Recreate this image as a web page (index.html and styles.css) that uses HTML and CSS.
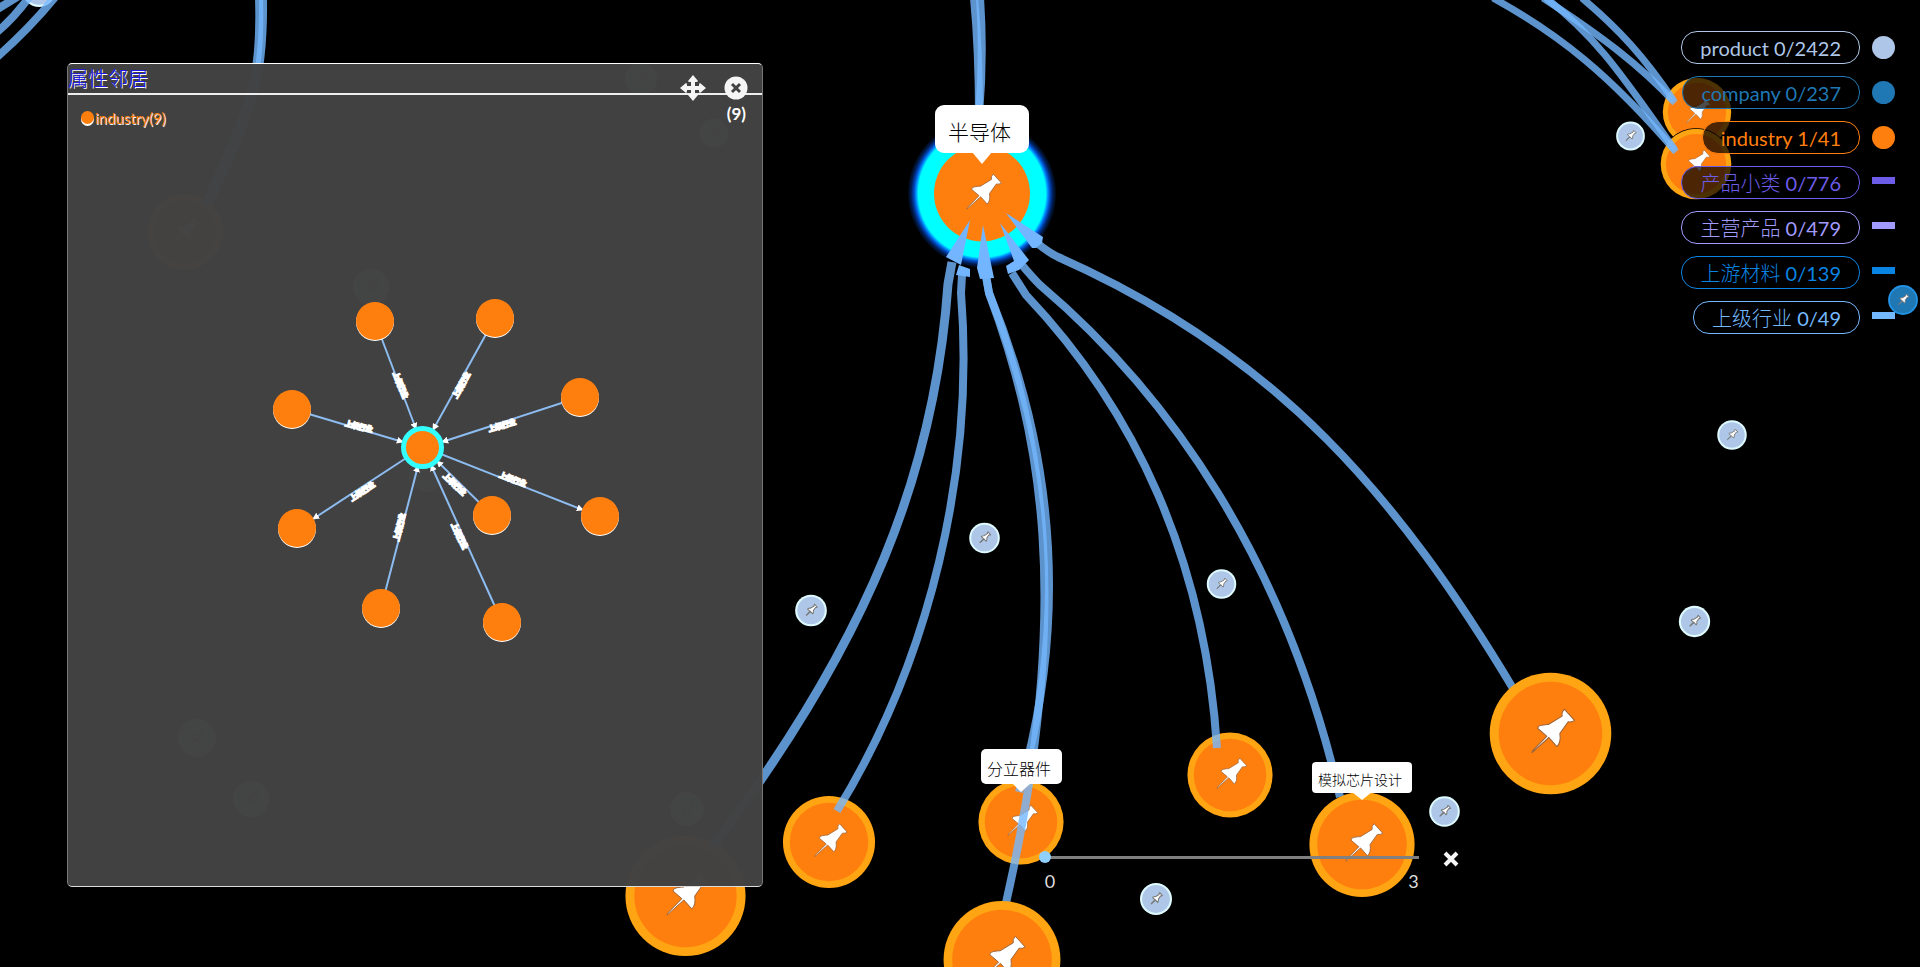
FILE: index.html
```html
<!DOCTYPE html>
<html lang="zh-CN">
<head>
<meta charset="utf-8">
<meta name="viewport" content="width=device-width, initial-scale=1">
<title>半导体</title>
<link rel="stylesheet" href="styles.css">
</head>
<body>
<main class="stage">
  <svg class="graph" viewBox="0 0 1920 967" preserveAspectRatio="xMidYMin slice" role="img" aria-label="产业关系图">
    <defs>
      <path id="pin" d="M42-72L72-39Q64-33 53-35L28 0Q32 28 19 39L-5 12L-56 58L-53 51L-11 8L-38-15Q-38-24-26-25Q-10-28-6-27L35-52Q32-64 42-72Z"/>
      <g id="industry">
        <circle r="182" fill="#ffa412"/><circle r="155" fill="#ff7f0e"/>
        <use href="#pin" class="pin"/>
      </g>
      <g id="product">
        <circle r="182" fill="#dffaff"/><circle r="158" fill="#aec7e8"/>
        <use href="#pin" class="pin pin-small"/>
      </g>
      <g id="company">
        <circle r="182" fill="#2293e6"/><circle r="160" fill="#1f77b4"/>
        <use href="#pin" class="pin pin-small"/>
      </g>
      <radialGradient id="halo">
        <stop offset="0.86" stop-color="#00ffff"/>
        <stop offset="0.89" stop-color="#0090ff"/>
        <stop offset="0.92" stop-color="#0048c0"/>
        <stop offset="0.96" stop-color="#001c50"/>
        <stop offset="1" stop-color="#000814"/>
      </radialGradient>
    </defs>

    <use href="#industry" transform="translate(185 232) scale(.208)"/>
    <use href="#industry" transform="translate(1697 112) scale(.188)"/>
    <circle cx="1696" cy="164" r="36"/>
    <use href="#industry" transform="translate(1696 164) scale(.194)"/>
    <use href="#industry" transform="translate(685.5 896) scale(.33)"/>
    <use href="#industry" transform="translate(829 842) scale(.253)"/>
    <use href="#industry" transform="translate(1021 822) scale(.234)"/>
    <use href="#industry" transform="translate(1230 775) scale(.234)"/>
    <use href="#product" transform="translate(39 -10) scale(.093)"/>

    <g class="links">
      <path d="M-4 10L22-6"/>
      <path d="M-4 33Q14 18 30-4"/>
      <path d="M-4 58Q30 28 56-4"/>
      <path d="M259-2Q261 60 250 95T205 205"/>
      <path d="M263-2Q264 60 252 100T208 205"/>
      <path d="M974-2Q979 50 979 115"/>
      <path d="M980-2Q984 55 979 115"/>
      <path class="wide" d="M952 262L948 284C935 470 870 640 710 850"/>
      <path d="M962 275L961 293C975 470 930 660 837 811"/>
      <path d="M986 276L989 293C1040 430 1075 600 1006 903"/>
      <path d="M986 276L989 293C1045 430 1075 600 1019 792"/>
      <path d="M1012 273L1026 295C1135 410 1205 560 1217 748"/>
      <path d="M1022 265Q1032 277 1040 285C1170 395 1285 560 1340 797"/>
      <path d="M1037 243Q1048 252 1058 257C1280 355 1400 500 1514 690"/>
      <path class="thin" d="M1493-2C1560 35 1610 75 1676 152"/>
      <path class="thin" d="M1546-2C1600 40 1625 80 1675 150"/>
      <path class="thin" d="M1543-2C1600 35 1640 65 1675 103"/>
      <path class="thin" d="M1582-2C1620 30 1645 58 1674 101"/>
    </g>

    <circle cx="982" cy="193.5" r="74" fill="url(#halo)"/>
    <circle cx="982" cy="193.5" r="48" fill="#ff7f0e"/>
    <use href="#pin" class="pin" transform="translate(982 193.5) scale(.27)"/>
    <g class="arrows">
      <path d="M970 220L946 257L961 265Z"/>
      <path d="M959 265L970 269L970 277L956 275Z"/>
      <path d="M983 225L994 278L980 279L977 268Z"/>
      <path d="M1000 223L1029 260L1019 270L1008 274L1006 266L1014 261Z"/>
      <path d="M1006 213L1043 237L1042 243L1036 248L1032 248Z"/>
    </g>

    <use href="#industry" transform="translate(1550.5 733.5) scale(.334)"/>
    <use href="#industry" transform="translate(1362 844.5) scale(.289)"/>
    <use href="#industry" transform="translate(1002 959.5) scale(.321)"/>

    <use href="#product" transform="translate(371 287) scale(.099)"/>
    <use href="#product" transform="translate(197 738) scale(.104)"/>
    <use href="#product" transform="translate(251 799) scale(.099)"/>
    <use href="#product" transform="translate(687 809) scale(.093)"/>
    <use href="#product" transform="translate(641 79) scale(.088)"/>
    <use href="#product" transform="translate(714 133) scale(.08)"/>
    <use href="#product" transform="translate(426 475) scale(.093)"/>
    <use href="#product" transform="translate(1630.5 136) scale(.079)"/>
    <use href="#product" transform="translate(1732 435) scale(.081)"/>
    <use href="#product" transform="translate(1694.5 621.5) scale(.086)"/>
    <use href="#product" transform="translate(1444.5 811.5) scale(.084)"/>
    <use href="#product" transform="translate(1156 899) scale(.088)"/>
    <use href="#product" transform="translate(984.5 538) scale(.084)"/>
    <use href="#product" transform="translate(1221.5 584) scale(.081)"/>
    <use href="#product" transform="translate(811 610.5) scale(.087)"/>

    <g class="callout callout-large">
      <rect x="935" y="105" width="94" height="48" rx="9"/><path d="M972 152H992L982 164Z"/>
      <text x="948" y="140">半导体</text>
    </g>
    <g class="callout callout-medium">
      <rect x="981" y="749" width="81" height="35" rx="5"/><path d="M1012 783H1031L1021 792Z"/>
      <text x="987" y="775">分立器件</text>
    </g>
    <g class="callout callout-small">
      <rect x="1312" y="762" width="100" height="31" rx="4"/><path d="M1352 792H1372L1362 800Z"/>
      <text x="1318" y="785">模拟芯片设计</text>
    </g>
  </svg>

  <svg class="edge-node" viewBox="-15 -15 30 30" aria-hidden="true"><use href="#company" transform="scale(.082)"/></svg>

  <section class="panel" aria-labelledby="panel-title">
    <header class="panel-header">
      <h2 id="panel-title" class="panel-title">属性邻居</h2>
      <div class="panel-tools">
        <button class="tool" type="button" aria-label="移动">
          <svg viewBox="0 0 26 26" width="26" height="26"><path fill="#f5f5f5" d="M13 0l5 6q0 1-2 1h-1v4h4v-1q0-2 1-2l6 5-6 5q-1 0-1-2v-1h-4v4h1q2 0 2 1l-5 6-5-6q0-1 2-1h1v-4H7v1q0 2-1 2l-6-5 6-5q1 0 1 2v1h4V7h-1q-2 0-2-1z"/></svg>
        </button>
        <button class="tool" type="button" aria-label="关闭">
          <svg viewBox="0 0 24 24" width="24" height="26"><circle cx="12" cy="12" r="11.5" fill="#f5f5f5"/><path d="M8 8l8 8M16 8l-8 8" stroke="#424242" stroke-width="3"/></svg>
        </button>
      </div>
    </header>
    <div class="panel-meta">
      <span class="panel-key"><i class="key-dot"></i>industry(9)</span>
      <span class="panel-count">(9)</span>
    </div>
    <svg class="neighbours" viewBox="68 129 694 757" role="img" aria-label="邻居关系图">
      <defs>
        <marker id="arrow" viewBox="0 0 8 8" refX="7" refY="4" markerWidth="7" markerHeight="7" markerUnits="userSpaceOnUse" orient="auto"><path d="M0 0L8 4L0 8Z" fill="#fff"/></marker>
      </defs>
      <g class="mini-links">
        <path d="M375 321L416 429"/><path d="M495 318L433 430"/>
        <path d="M580 397L442 442"/><path d="M292 409L403 442"/>
        <path d="M423 447L313 519"/><path d="M423 447L583 510"/>
        <path d="M492 515L437 461"/><path d="M381 608L418 466"/>
        <path d="M502 622L431 465"/>
      </g>
      <g class="mini-nodes">
        <circle cx="375" cy="321" r="19"/><circle cx="495" cy="318" r="19"/>
        <circle cx="580" cy="397" r="19"/><circle cx="292" cy="409" r="19"/>
        <circle cx="297" cy="528" r="19"/><circle cx="600" cy="516" r="19"/>
        <circle cx="492" cy="515" r="19"/><circle cx="381" cy="608" r="19"/>
        <circle cx="502" cy="622" r="19"/>
      </g>
      <circle cx="422.5" cy="447.5" r="19" fill="#ff7f0e" stroke="#33ffff" stroke-width="5"/>
      <g class="mini-labels">
        <text transform="translate(401 385) rotate(68)" y="3">上级行业</text>
        <text transform="translate(461 385) rotate(-61)" y="3">上级行业</text>
        <text transform="translate(502 425) rotate(-16)" y="3">上级行业</text>
        <text transform="translate(359 426) rotate(14)" y="3">上级行业</text>
        <text transform="translate(362 491) rotate(-33)" y="3">上级行业</text>
        <text transform="translate(513 479) rotate(21)" y="3">上级行业</text>
        <text transform="translate(455 484) rotate(44)" y="3">上级行业</text>
        <text transform="translate(399 527) rotate(-76)" y="3">上级行业</text>
        <text transform="translate(460 536) rotate(65)" y="3">上级行业</text>
      </g>
    </svg>
  </section>

  <aside class="legend">
    <div class="legend-row product"><button type="button" class="pill">product 0/2422</button><i class="dot"></i></div>
    <div class="legend-row company"><button type="button" class="pill">company 0/237</button><i class="dot"></i></div>
    <div class="legend-row industry"><button type="button" class="pill">industry 1/41</button><i class="dot"></i></div>
    <div class="legend-row category"><button type="button" class="pill">产品小类 0/776</button><i class="bar"></i></div>
    <div class="legend-row main-product"><button type="button" class="pill">主营产品 0/479</button><i class="bar"></i></div>
    <div class="legend-row material"><button type="button" class="pill">上游材料 0/139</button><i class="bar"></i></div>
    <div class="legend-row parent"><button type="button" class="pill">上级行业 0/49</button><i class="bar"></i></div>
  </aside>

  <div class="depth">
    <div class="depth-main">
      <input class="depth-range" type="range" min="0" max="3" value="0" aria-label="层数">
      <div class="depth-scale"><span>0</span><span>3</span></div>
    </div>
    <button class="depth-close" type="button" aria-label="关闭">
      <svg viewBox="0 0 16 16" width="16" height="16"><path d="M2 2l12 12M14 2L2 14" stroke="#f5f5f5" stroke-width="4"/></svg>
    </button>
  </div>
</main>
</body>
</html>
```
FILE: styles.css
```css
* { box-sizing: border-box; }

body {
  margin: 0;
  background: #000;
  font-family: Lato, "Noto Sans CJK SC Light", "Noto Sans CJK SC", sans-serif;
  font-weight: 400;
}

button {
  padding: 0;
  border: 0;
  background: none;
  font: inherit;
  color: inherit;
  cursor: pointer;
}

.stage {
  position: relative;
  height: 100vh;
  overflow: hidden;
  border-bottom: 1px solid #fff;
  background: #000;
}

.graph {
  display: block;
  width: 100%;
  height: 100%;
}

.pin { fill: #fff; stroke: #9a6238; stroke-width: 3; }
.pin-small { stroke: #777; stroke-width: 12; }

.links path {
  fill: none;
  stroke: #74b8ff;
  stroke-opacity: .8;
  stroke-width: 8;
}
.links .wide { stroke-width: 9; }
.links .thin { stroke-width: 7; }
.arrows { fill: #74b5ff; }

.callout { fill: #fff; }
.callout text { fill: #000; }
.callout-large text { font-size: 21px; }
.callout-medium text { font-size: 16px; }
.callout-small text { font-size: 14px; }

.edge-node {
  position: absolute;
  top: 285px;
  right: 2px;
  z-index: 3;
  width: 30px;
  height: 30px;
}

.panel {
  position: absolute;
  top: 63px;
  left: 67px;
  display: flex;
  flex-direction: column;
  width: 696px;
  height: 824px;
  border: 1px solid #777;
  border-top-color: #fff;
  border-bottom-color: #ddd;
  border-radius: 5px;
  background: rgba(66, 66, 66, .99);
}

.panel-header {
  position: relative;
  height: 31px;
  border-bottom: 2px solid #eee;
}

.panel-title {
  margin: 0;
  color: #2018e8;
  font-size: 20px;
  font-weight: 400;
  line-height: 28px;
  text-shadow: 1px 1px 0 #fff;
}

.panel-tools {
  position: absolute;
  top: 11px;
  right: 14px;
  display: flex;
  align-items: center;
  gap: 18px;
}

.tool { display: block; height: 26px; }
.tool svg { display: block; }

.panel-meta {
  display: flex;
  justify-content: space-between;
  height: 34px;
  padding: 7px 16px 0 13px;
  color: #fff;
  line-height: 24px;
}

.panel-key {
  display: flex;
  align-items: center;
  gap: 1px;
  padding-top: 4px;
  color: #ff7f0e;
  font-size: 15px;
  text-shadow: 1px 1px 0 #eee;
}

.key-dot {
  width: 13px;
  height: 13px;
  border-radius: 50%;
  background: #ff7f0e;
  box-shadow: 0 2px 0 #fff;
}

.panel-count { font-size: 17px; font-weight: 700; }

.neighbours {
  flex: 1;
  width: 100%;
  min-height: 0;
}

.mini-links { fill: none; stroke: #8dbcf0; stroke-width: 2; }
.mini-links path { marker-end: url(#arrow); }
.mini-nodes { fill: #ff7f0e; filter: drop-shadow(0 1px 0 #fff); }
.mini-labels {
  fill: #fff;
  stroke: #fff;
  stroke-width: 2;
  font-size: 7px;
  text-anchor: middle;
}

.legend {
  position: absolute;
  top: 31px;
  right: 25px;
  z-index: 2;
  display: grid;
  gap: 12px;
}

.legend-row {
  display: flex;
  align-items: center;
  justify-content: flex-end;
  gap: 12px;
  height: 33px;
}

.pill {
  height: 33px;
  padding: 1px 18px 0;
  border: 1px solid;
  border-radius: 16px;
  background: rgba(0, 0, 0, .7);
  font-size: 20px;
  line-height: 28px;
  white-space: nowrap;
}

.dot, .bar { width: 23px; background: currentColor; }
.dot { height: 23px; border-radius: 50%; }
.bar { height: 7px; margin-bottom: 4px; }

.product { color: #aec7e8; }
.company { color: #1f77b4; }
.industry { color: #ff7f0e; }
.category { color: #6c5ce7; }
.main-product { color: #a29bfe; }
.material { color: #0984e3; }
.parent { color: #74b9ff; }

.depth {
  position: absolute;
  bottom: 74px;
  left: 54.1%;
  display: flex;
  gap: 24px;
  width: 420px;
}

.depth-main { flex: 1; }

.depth-range {
  display: block;
  width: 100%;
  height: 12px;
  margin: 0;
  appearance: none;
  background: linear-gradient(#808080, #808080) center / 100% 3px no-repeat;
}

.depth-range::-webkit-slider-thumb {
  appearance: none;
  width: 12px;
  height: 12px;
  border-radius: 50%;
  background: #8fd0ff;
}

.depth-scale {
  display: flex;
  justify-content: space-between;
  padding: 6px 0 0 6px;
  color: #ddd;
  font-size: 18px;
  line-height: 24px;
}

.depth-close { width: 16px; height: 16px; }
.depth-close svg { display: block; }
```
